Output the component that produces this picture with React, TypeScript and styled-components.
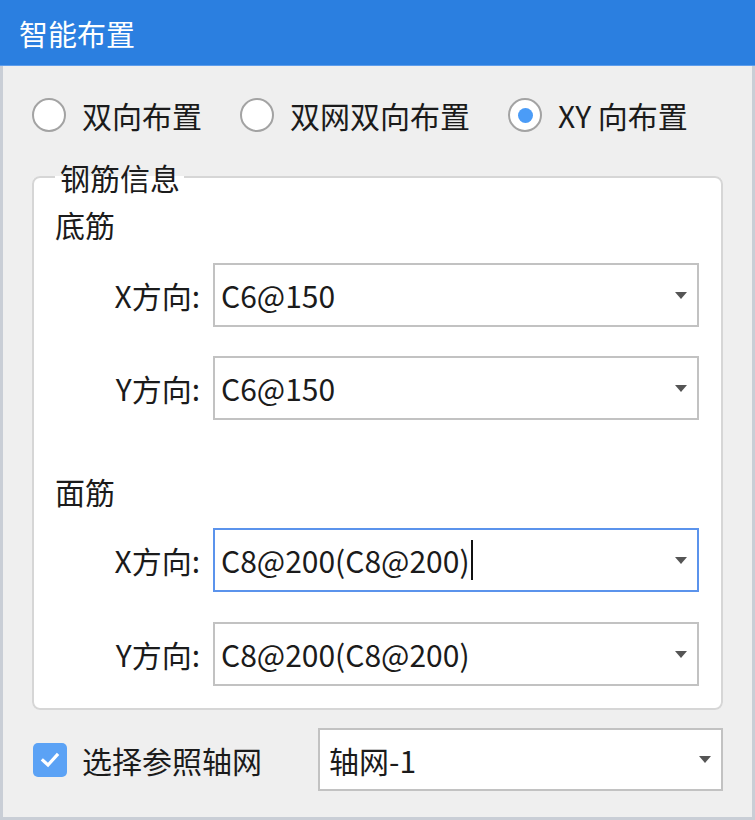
import React from 'react';
import styled, { createGlobalStyle } from 'styled-components';

const GlobalStyle = createGlobalStyle`
  html, body {
    margin: 0;
    padding: 0;
    background: #efefef;
  }
  body {
    font-family: "Noto Sans CJK SC", "Noto Sans", sans-serif;
    color: #1b1b1b;
  }
  * { box-sizing: border-box; }
`;

const Window = styled.div`
  width: 755px;
  height: 820px;
  display: flex;
  flex-direction: column;
  background: #efefef;
`;

const TitleBar = styled.div`
  height: 66px;
  flex: none;
  display: flex;
  align-items: center;
  padding-left: 19px;
  background: #2b7fe0;
  border-bottom: 1px solid #5e9deb;
  color: #ffffff;
  font-size: 29px;
  line-height: 36px;
`;

const Body = styled.div`
  flex: 1;
  padding: 32px 29px 0 29px;
  border: 3px solid #c9ced6;
  border-top: none;
`;

const RadioRow = styled.div`
  display: flex;
  align-items: center;
  gap: 38px;
  height: 34px;
`;

const RadioItem = styled.label`
  display: flex;
  align-items: center;
  gap: 16px;
  font-size: 30px;
  line-height: 36px;
`;

const RadioCircle = styled.span<{ $checked?: boolean }>`
  width: 34px;
  height: 34px;
  border-radius: 50%;
  border: 2px solid #a3a3a3;
  background: #ffffff;
  display: flex;
  align-items: center;
  justify-content: center;

  &::after {
    content: '';
    width: 15px;
    height: 15px;
    border-radius: 50%;
    background: ${(p) => (p.$checked ? '#4b9cf7' : 'transparent')};
  }
`;

const Group = styled.fieldset`
  margin: 27px 0 0 0;
  padding: 0 22px 22px 21px;
  border: 2px solid #d6d6d6;
  border-radius: 8px;
  background: #ffffff;
`;

const Legend = styled.legend`
  padding: 0 4px 0 5px;
  font-size: 30px;
  line-height: 36px;
`;

const SectionTitle = styled.div<{ $top: number }>`
  margin-top: ${(p) => p.$top}px;
  font-size: 30px;
  line-height: 36px;
`;

const FieldRow = styled.div<{ $top: number }>`
  display: flex;
  align-items: center;
  margin-top: ${(p) => p.$top}px;
`;

const FieldLabel = styled.span`
  width: 145px;
  margin-right: 13px;
  text-align: right;
  font-size: 30px;
  line-height: 36px;
`;

const Select = styled.div<{ $focused?: boolean; $height?: number }>`
  flex: 1;
  height: ${(p) => p.$height ?? 64}px;
  display: flex;
  align-items: center;
  padding: 0 10px 0 6px;
  background: #ffffff;
  border: 2px solid ${(p) => (p.$focused ? '#5b93ec' : '#c2c2c2')};
  font-size: 30px;
  line-height: 36px;
`;

const Caret = styled.span`
  width: 2px;
  height: 40px;
  margin-left: 1px;
  background: #111111;
`;

const Arrow = styled.span`
  margin-left: auto;
  width: 0;
  height: 0;
  border-left: 6px solid transparent;
  border-right: 6px solid transparent;
  border-top: 7px solid #555555;
`;

const BottomRow = styled.div`
  display: flex;
  align-items: center;
  margin-top: 18px;
`;

const CheckItem = styled.label`
  display: flex;
  align-items: center;
  gap: 15px;
  font-size: 30px;
  line-height: 36px;
  padding-left: 1px;
`;

const CheckBox = styled.span`
  width: 34px;
  height: 34px;
  border-radius: 5px;
  background: #5ba2f5;
  display: flex;
  align-items: center;
  justify-content: center;
`;

const RefSelect = styled(Select)`
  flex: none;
  width: 405px;
  margin-left: auto;
  padding-left: 9px;
`;

const Field = ({ label, value, top, focused }: { label: string; value: string; top: number; focused?: boolean }) => (
  <FieldRow $top={top}>
    <FieldLabel>{label}</FieldLabel>
    <Select $focused={focused}>
      {value}
      {focused && <Caret />}
      <Arrow />
    </Select>
  </FieldRow>
);

export default function App() {
  return (
    <>
      <GlobalStyle />
      <Window>
        <TitleBar>智能布置</TitleBar>
        <Body>
          <RadioRow>
            <RadioItem>
              <RadioCircle />
              双向布置
            </RadioItem>
            <RadioItem>
              <RadioCircle />
              双网双向布置
            </RadioItem>
            <RadioItem>
              <RadioCircle $checked />
              XY 向布置
            </RadioItem>
          </RadioRow>

          <Group>
            <Legend>钢筋信息</Legend>
            <SectionTitle $top={11}>底筋</SectionTitle>
            <Field label="X方向:" value="C6@150" top={21} />
            <Field label="Y方向:" value="C6@150" top={29} />
            <SectionTitle $top={53}>面筋</SectionTitle>
            <Field label="X方向:" value="C8@200(C8@200)" top={19} focused />
            <Field label="Y方向:" value="C8@200(C8@200)" top={30} />
          </Group>

          <BottomRow>
            <CheckItem>
              <CheckBox>
                <svg width="20" height="16" viewBox="0 0 20 16">
                  <polyline points="3,8.5 8,13 17,3" fill="none" stroke="#ffffff" strokeWidth="3.2" strokeLinecap="square" />
                </svg>
              </CheckBox>
              选择参照轴网
            </CheckItem>
            <RefSelect $height={63}>
              轴网-1
              <Arrow />
            </RefSelect>
          </BottomRow>
        </Body>
      </Window>
    </>
  );
}
